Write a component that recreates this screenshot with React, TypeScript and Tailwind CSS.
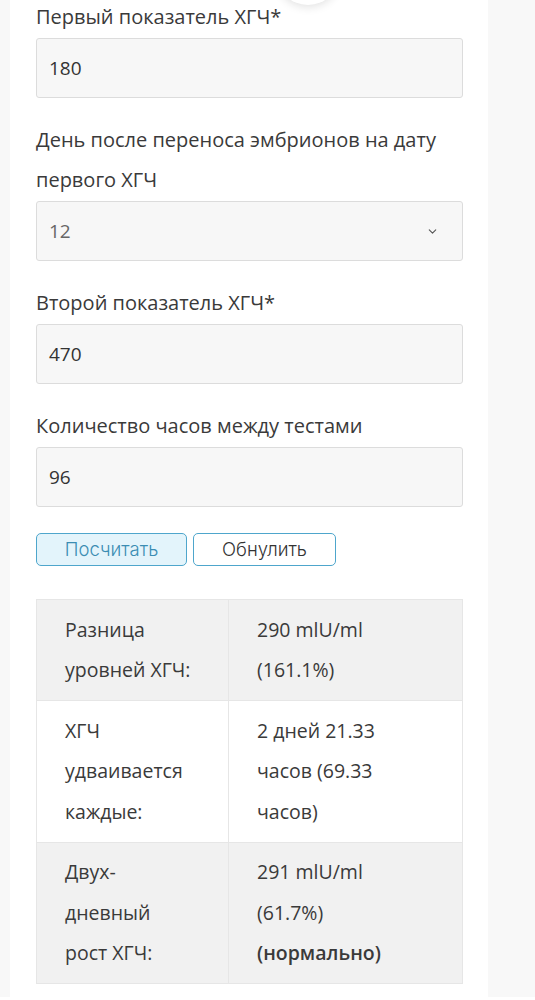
import { ChevronDown } from "lucide-react";

const FONT = "font-['Open_Sans',sans-serif]";

const ROWS = [
  {
    label: ["Разница", "уровней ХГЧ:"],
    value: ["290 mlU/ml", "(161.1%)"],
    gray: true,
  },
  {
    label: ["ХГЧ", "удваивается", "каждые:"],
    value: ["2 дней 21.33", "часов (69.33", "часов)"],
    gray: false,
  },
  {
    label: ["Двух-", "дневный", "рост ХГЧ:"],
    value: ["291 mlU/ml", "(61.7%)", "(нормально)"],
    gray: true,
  },
];

function Field({ label, value, select }: { label: string; value: string; select?: boolean }) {
  return (
    <div className="mb-[22px]">
      <div className="mb-[1px] text-[20px] leading-[40px] text-[#3a3a3a]">{label}</div>
      <div className="flex h-[60px] items-center justify-between rounded-[3px] border border-[#dcdcdc] bg-[#f7f7f7] pl-[12px] pr-[23px]">
        <span className={select ? "text-[19px] text-[#666]" : "text-[19px] text-[#333]"}>{value}</span>
        {select && <ChevronDown className="h-[13px] w-[13px] text-[#555]" strokeWidth={2} />}
      </div>
    </div>
  );
}

export default function App() {
  return (
    <div className={`min-h-[1000px] bg-[#f8f8f8] pl-[10px] pr-[47px] ${FONT}`}>
      <div className="relative min-h-[1000px] bg-white pl-[26px] pr-[25px]">
        <div className="absolute left-[266px] top-[-56px] h-[64px] w-[64px] rounded-full bg-white shadow-[0_2px_10px_rgba(0,0,0,0.12)]" />
        <div className="-mt-[3px]">
          <Field label="Первый показатель ХГЧ*" value="180" />
          <Field label="День после переноса эмбрионов на дату первого ХГЧ" value="12" select />
          <Field label="Второй показатель ХГЧ*" value="470" />
          <Field label="Количество часов между тестами" value="96" />
        </div>

        <div className="mt-[26px] flex gap-[6px] font-['Inter',sans-serif] text-[18.5px] font-light">
          <button className="h-[33px] w-[151px] rounded-[5px] border border-[#4ea6cc] bg-[#e3f4fb] text-[#3b8db3]">
            Посчитать
          </button>
          <button className="h-[33px] w-[143px] rounded-[5px] border border-[#4ea6cc] bg-white text-[#333]">
            Обнулить
          </button>
        </div>

        <table className="mt-[33px] w-full border-collapse text-[19.5px] leading-[40.5px] text-[#3a3a3a]">
          <tbody>
            {ROWS.map((r, i) => (
              <tr key={i} className={r.gray ? "bg-[#f1f1f1]" : "bg-white"}>
                <td className="w-[192px] border border-[#e6e6e6] px-[28px] py-[9.5px] align-top">
                  {r.label.map((l) => (
                    <div key={l}>{l}</div>
                  ))}
                </td>
                <td className="border border-[#e6e6e6] px-[28px] py-[9.5px] align-top">
                  {r.value.map((v) => (
                    <div key={v} className={v === "(нормально)" ? "font-semibold" : ""}>
                      {v}
                    </div>
                  ))}
                </td>
              </tr>
            ))}
          </tbody>
        </table>
      </div>
    </div>
  );
}
